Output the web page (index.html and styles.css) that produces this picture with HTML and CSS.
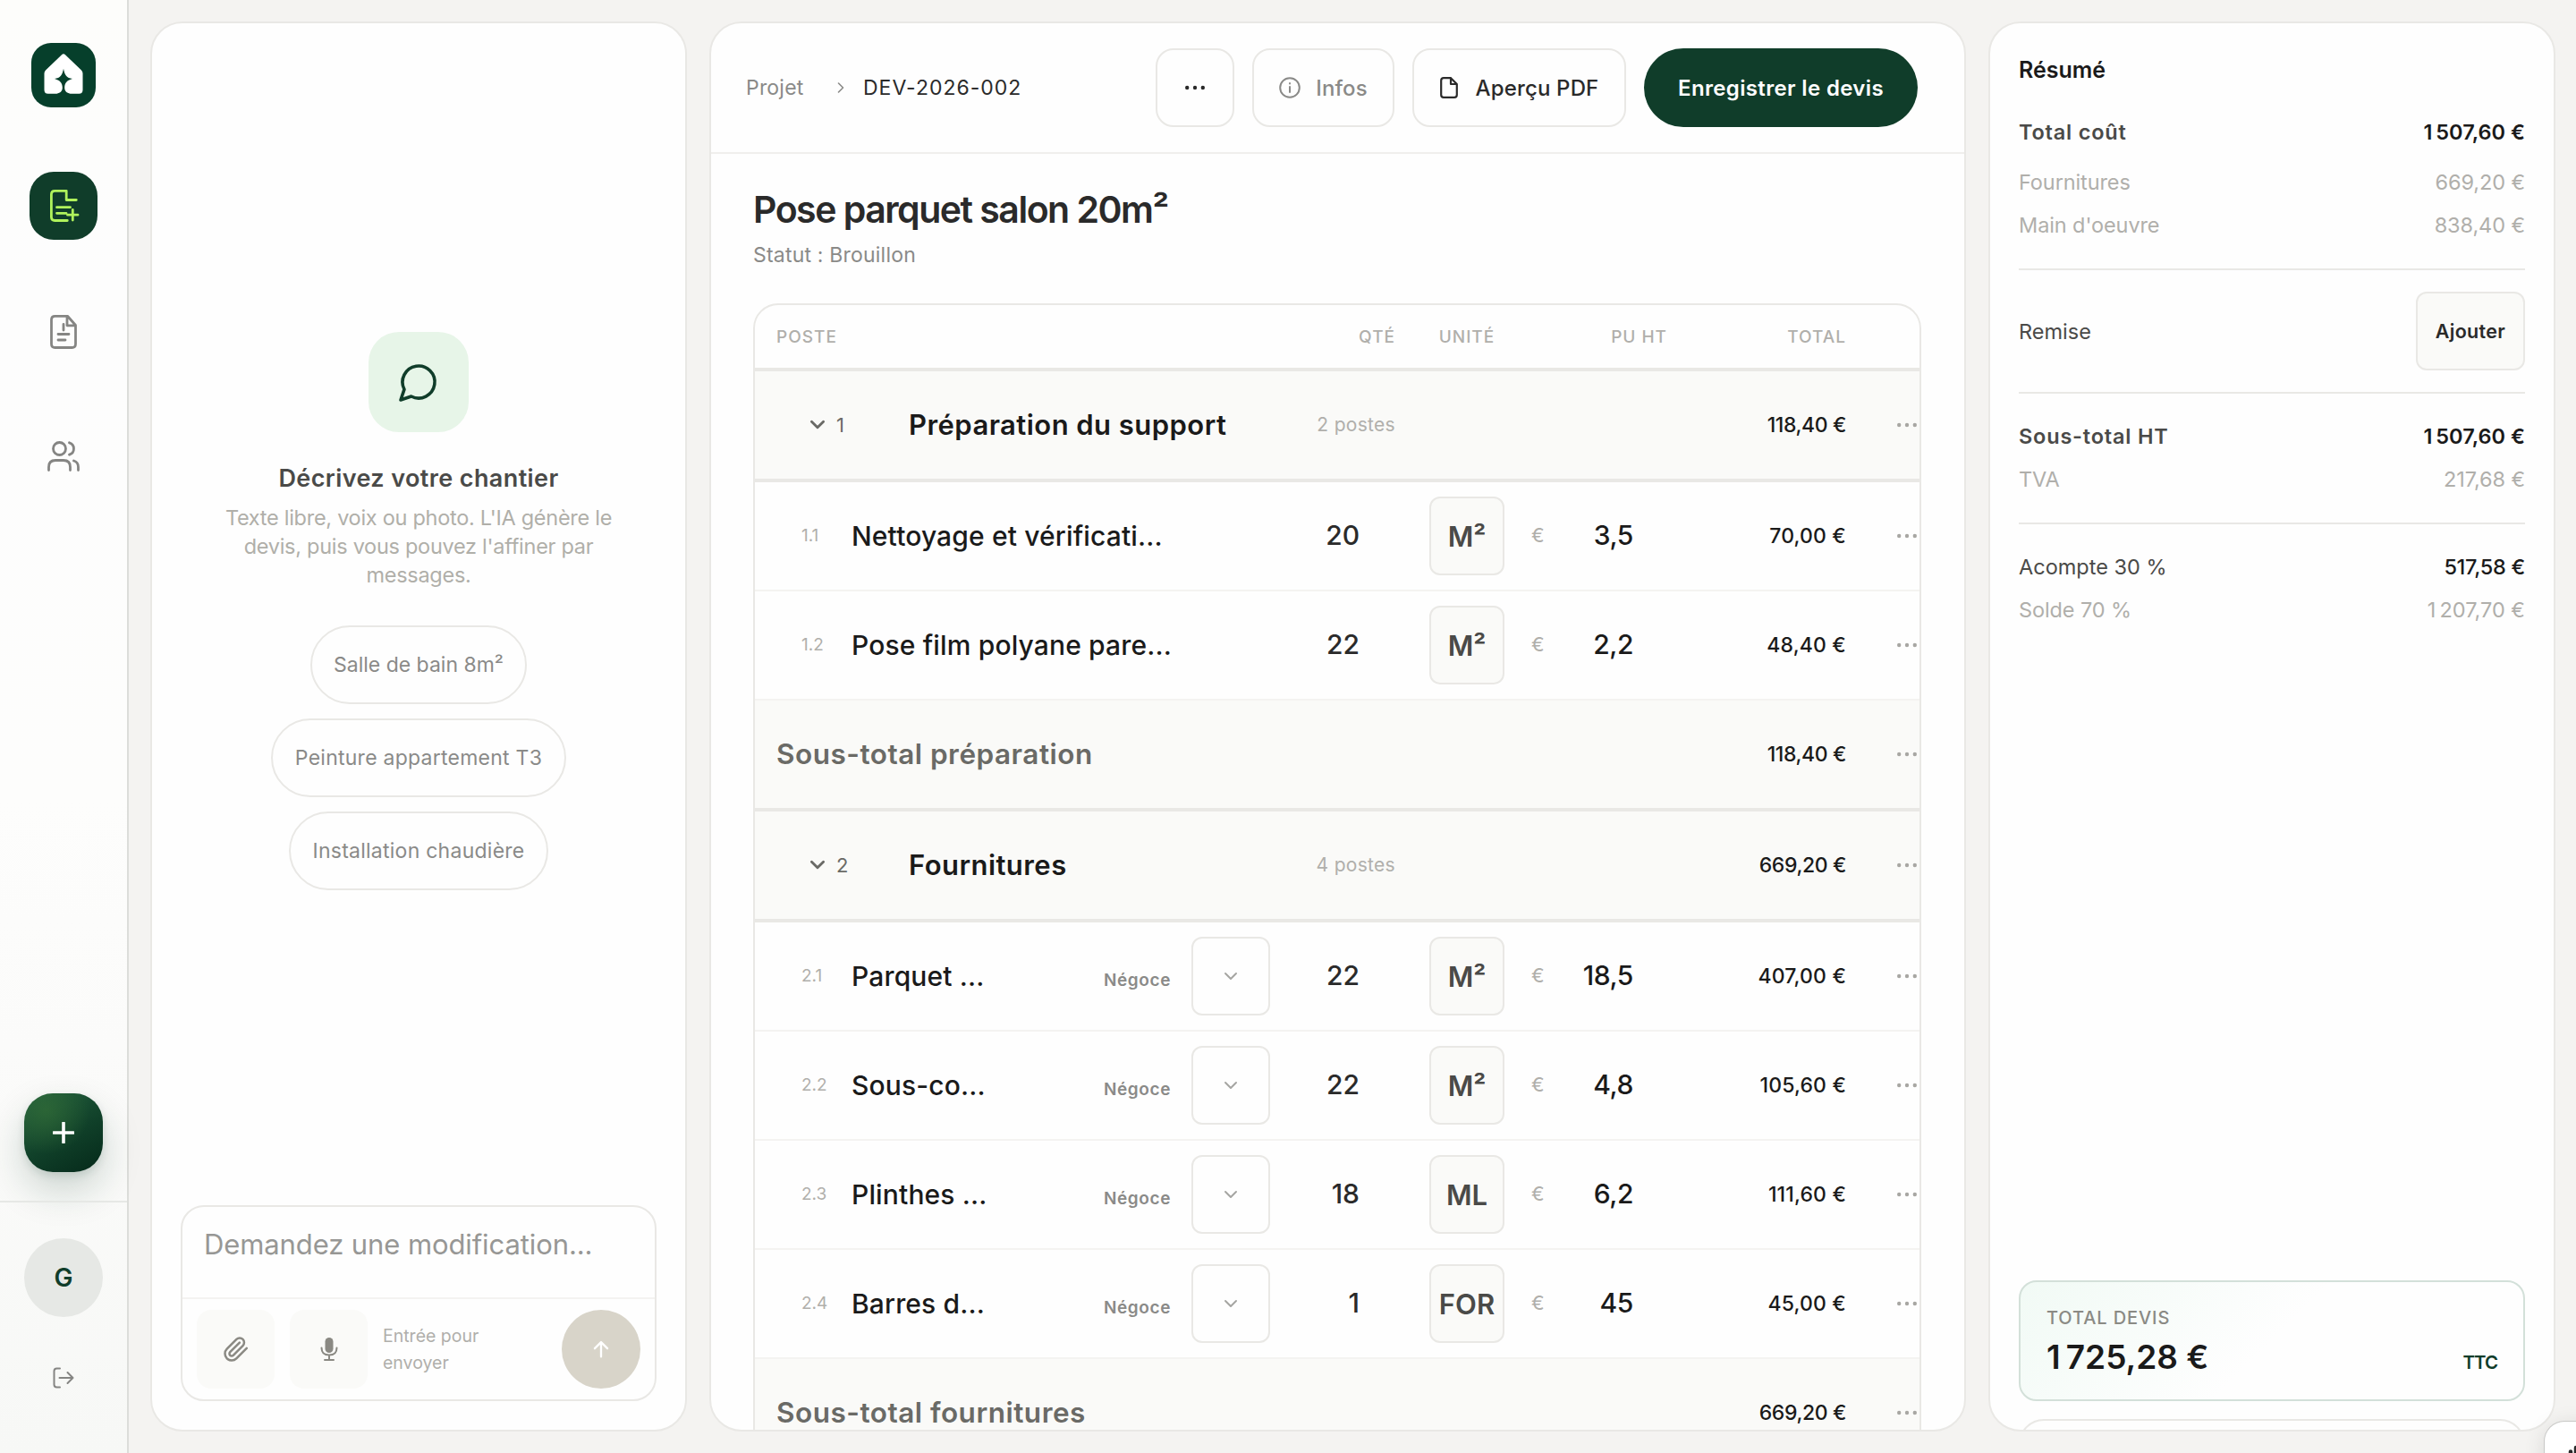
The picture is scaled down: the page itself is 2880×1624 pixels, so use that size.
FILE: index.html
```html
<!DOCTYPE html>
<html lang="fr">
<head>
    <meta charset="UTF-8">
    <meta name="viewport" content="width=device-width, initial-scale=1.0">
    <title>DEV-2026-002 - Pose parquet salon 20m²</title>
    <link rel="stylesheet" href="styles.css">
</head>
<body>
    <svg width="0" height="0" class="sprite">
        <symbol id="dots" viewBox="0 0 24 24"><circle cx="3.2" cy="12" r="2.2"/><circle cx="12" cy="12" r="2.2"/><circle cx="20.8" cy="12" r="2.2"/></symbol>
        <symbol id="chevron" viewBox="0 0 16 10"><path d="M2 2l6 6 6-6"/></symbol>
    </svg>

    <aside class="sidebar">
        <div class="logo">
            <svg viewBox="0 0 72 72"><path fill="#fff" d="M34 13.200Q36 11.300 38 13.200L56 30.500Q57.500 32 57.500 34V52.500Q57.500 56.700 53.300 56.700H43.500C39.500 56 37.200 53.500 37.200 50C37.200 44.500 40.500 41.500 46 40C39.500 39 37.300 36 36 28.700C34.700 36 32.500 39 26 40C31.500 41.500 34.800 44.500 34.800 50C34.800 53.500 32.500 56 28.500 56.700H18.700Q14.500 56.700 14.500 52.500V34Q14.500 32 16 30.500Z"/></svg>
        </div>
        <nav class="nav">
            <a class="nav-item active">
                <svg viewBox="0 0 76 76"><path d="M52.300 31.500H41.200V21.300H28.300Q24.400 21.300 24.400 25.200V50.600Q24.400 54.500 28.300 54.500H42.300M30.500 39.700H45.500M30.500 46.300H41M48.300 42.500V54M42.500 48.200H54"/></svg>
            </a>
            <a class="nav-item">
                <svg viewBox="0 0 76 76"><path d="M42.500 21.300H28.500Q24.500 21.300 24.500 25.300V52.500Q24.500 56.500 28.500 56.500H47.500Q51.500 56.500 51.500 52.500V31.500ZM42 21.800V31.800H51.500M38 30.500V37M32 41.500H44M32 48H40"/></svg>
            </a>
            <a class="nav-item">
                <svg viewBox="0 0 76 76"><path d="M21.500 53.500V50Q21.500 42.500 29 42.500H38Q45.500 42.500 45.500 50V53.500M33.500 22.500A7 7 0 0 1 33.500 36.500A7 7 0 0 1 33.500 22.500M44.500 22.800A7 7 0 0 1 44.500 36.200M49.500 43Q54.500 44.500 54.500 50V53.500"/></svg>
            </a>
        </nav>
        <button class="add-btn"><svg viewBox="0 0 24 24"><path d="M12 1v22M1 12h22"/></svg></button>
        <div class="account">
            <div class="avatar">G</div>
            <svg class="logout" viewBox="0 0 24 24"><path d="M8 1.500H4.500Q1.500 1.500 1.500 4.500V19.500Q1.500 22.500 4.500 22.500H8M7.500 12H22.500M16.500 6l6 6-6 6"/></svg>
        </div>
    </aside>

    <main class="workspace">
        <section class="panel chat">
            <div class="chat-empty">
                <div class="chat-icon">
                    <svg viewBox="0 0 24 24"><path d="M7.900 20A9 9 0 1 0 4 16.100L2 22Z"/></svg>
                </div>
                <h2>Décrivez votre chantier</h2>
                <p>Texte libre, voix ou photo. L'IA génère le<br>devis, puis vous pouvez l'affiner par<br>messages.</p>
                <div class="chips">
                    <button class="chip chip-1">Salle de bain 8m²</button>
                    <button class="chip chip-2">Peinture appartement T3</button>
                    <button class="chip chip-3">Installation chaudière</button>
                </div>
            </div>
            <div class="composer">
                <div class="composer-input">Demandez une modification...</div>
                <div class="composer-bar">
                    <button class="tool"><svg class="clip" viewBox="0 0 24 24"><path d="M21.440 11.050l-9.190 9.190a6 6 0 0 1-8.490-8.490l8.570-8.570A4 4 0 1 1 18 8.840l-8.590 8.570a2 2 0 0 1-2.830-2.830l8.490-8.480"/></svg></button>
                    <button class="tool"><svg class="mic" viewBox="0 0 20 28"><rect x="5.500" y="1" width="9" height="17" rx="4.500" fill="currentColor" stroke="none"/><path d="M1.500 12.500Q1.500 20.500 10 20.500Q18.500 20.500 18.500 12.500M10 20.500V26M5 26h10"/></svg></button>
                    <span class="hint">Entrée pour envoyer</span>
                    <button class="send"><svg viewBox="0 0 24 24"><path d="M12 22V3M3.500 11L12 2.500 20.500 11"/></svg></button>
                </div>
            </div>
        </section>

        <section class="panel quote">
            <header class="quote-header">
                <div class="breadcrumb">
                    <span class="crumb">Projet</span>
                    <svg viewBox="0 0 8 12"><path d="M1.500 1l5 5-5 5"/></svg>
                    <span class="crumb current">DEV-2026-002</span>
                </div>
                <div class="actions">
                    <button class="btn btn-more"><svg class="ico-dots"><use href="#dots"/></svg></button>
                    <button class="btn btn-infos"><svg viewBox="0 0 24 24"><circle cx="12" cy="12" r="10.800"/><path d="M12 11v6M12 7v.5"/></svg>Infos</button>
                    <button class="btn btn-pdf"><svg viewBox="0 0 20 24"><path d="M12 1.200H4Q1.200 1.200 1.200 4V20Q1.200 22.800 4 22.800H16Q18.800 22.800 18.800 20V8L12 1.200V8H18.800"/></svg>Aperçu PDF</button>
                    <button class="btn btn-save">Enregistrer le devis</button>
                </div>
            </header>

            <div class="quote-body">
                <h1>Pose parquet salon 20m²</h1>
                <p class="status">Statut : Brouillon</p>

                <div class="table">
                    <div class="row head">
                        <span>POSTE</span><span class="qty">QTÉ</span><span class="unit">UNITÉ</span><span class="pu">PU HT</span><span class="total">TOTAL</span><span></span>
                    </div>

                    <div class="row section">
                        <div class="poste"><svg class="chev"><use href="#chevron"/></svg><span class="num">1</span><span class="name">Préparation du support</span></div>
                        <span class="count">2 postes</span><span></span><span></span><span class="total">118,40 €</span>
                        <svg class="dots"><use href="#dots"/></svg>
                    </div>
                    <div class="row item">
                        <div class="poste"><span class="num">1.1</span><span class="name">Nettoyage et vérificati...</span></div>
                        <span class="qty">20</span><span class="unit"><b>M²</b></span><span class="pu"><i>€</i>3,5</span><span class="total">70,00 €</span>
                        <svg class="dots"><use href="#dots"/></svg>
                    </div>
                    <div class="row item">
                        <div class="poste"><span class="num">1.2</span><span class="name">Pose film polyane pare...</span></div>
                        <span class="qty">22</span><span class="unit"><b>M²</b></span><span class="pu"><i>€</i>2,2</span><span class="total">48,40 €</span>
                        <svg class="dots"><use href="#dots"/></svg>
                    </div>
                    <div class="row subtotal">
                        <span class="name">Sous-total préparation</span><span></span><span></span><span></span><span class="total">118,40 €</span>
                        <svg class="dots"><use href="#dots"/></svg>
                    </div>

                    <div class="row section">
                        <div class="poste"><svg class="chev"><use href="#chevron"/></svg><span class="num">2</span><span class="name">Fournitures</span></div>
                        <span class="count">4 postes</span><span></span><span></span><span class="total">669,20 €</span>
                        <svg class="dots"><use href="#dots"/></svg>
                    </div>
                    <div class="row item">
                        <div class="poste"><span class="num">2.1</span><span class="name">Parquet ...</span><span class="tag">Négoce</span><span class="select"><svg><use href="#chevron"/></svg></span></div>
                        <span class="qty">22</span><span class="unit"><b>M²</b></span><span class="pu"><i>€</i>18,5</span><span class="total">407,00 €</span>
                        <svg class="dots"><use href="#dots"/></svg>
                    </div>
                    <div class="row item">
                        <div class="poste"><span class="num">2.2</span><span class="name">Sous-co...</span><span class="tag">Négoce</span><span class="select"><svg><use href="#chevron"/></svg></span></div>
                        <span class="qty">22</span><span class="unit"><b>M²</b></span><span class="pu"><i>€</i>4,8</span><span class="total">105,60 €</span>
                        <svg class="dots"><use href="#dots"/></svg>
                    </div>
                    <div class="row item">
                        <div class="poste"><span class="num">2.3</span><span class="name">Plinthes ...</span><span class="tag">Négoce</span><span class="select"><svg><use href="#chevron"/></svg></span></div>
                        <span class="qty">18</span><span class="unit"><b>ML</b></span><span class="pu"><i>€</i>6,2</span><span class="total">111,60 €</span>
                        <svg class="dots"><use href="#dots"/></svg>
                    </div>
                    <div class="row item">
                        <div class="poste"><span class="num">2.4</span><span class="name">Barres d...</span><span class="tag">Négoce</span><span class="select"><svg><use href="#chevron"/></svg></span></div>
                        <span class="qty">1</span><span class="unit"><b>FOR</b></span><span class="pu"><i>€</i>45</span><span class="total">45,00 €</span>
                        <svg class="dots"><use href="#dots"/></svg>
                    </div>
                    <div class="row subtotal">
                        <span class="name">Sous-total fournitures</span><span></span><span></span><span></span><span class="total">669,20 €</span>
                        <svg class="dots"><use href="#dots"/></svg>
                    </div>
                </div>
            </div>
        </section>

        <section class="panel summary">
            <div class="summary-body">
                <h3>Résumé</h3>
                <div class="group first">
                    <div class="line strong"><span>Total coût</span><span>1&#8239;507,60 €</span></div>
                    <div class="line muted"><span>Fournitures</span><span>669,20 €</span></div>
                    <div class="line muted"><span>Main d'oeuvre</span><span>838,40 €</span></div>
                </div>
                <div class="group discount">
                    <div class="line"><span>Remise</span><button class="btn-small">Ajouter</button></div>
                </div>
                <div class="group">
                    <div class="line strong"><span>Sous-total HT</span><span>1&#8239;507,60 €</span></div>
                    <div class="line muted"><span>TVA</span><span>217,68 €</span></div>
                </div>
                <div class="group last">
                    <div class="line due"><span>Acompte 30 %</span><span>517,58 €</span></div>
                    <div class="line muted"><span>Solde 70 %</span><span>1&#8239;207,70 €</span></div>
                </div>
            </div>
            <div class="summary-footer">
                <div class="total-card">
                    <div class="total-label">TOTAL DEVIS</div>
                    <div class="total-row"><span class="amount">1&#8239;725,28 €</span><span class="ttc">TTC</span></div>
                </div>
                <div class="next-card"></div>
            </div>
        </section>
    </main>

    <div class="widget"><svg viewBox="0 0 24 24"><path d="M2 5v14M6 2v20M12 6v12M18 2v20M22 5v14"/></svg></div>
</body>
</html>
```
FILE: styles.css
```css
* {
    margin: 0;
    padding: 0;
    box-sizing: border-box;
}

body {
    display: flex;
    width: 100vw;
    height: 100vh;
    overflow: hidden;
    background: #f4f3f1;
    font-family: 'Inter', 'Liberation Sans', sans-serif;
    font-size: 23px;
    color: #1a1a1a;
}

button {
    font-family: inherit;
    background: none;
    border: none;
    white-space: nowrap;
}

svg {
    display: block;
    flex: none;
    fill: none;
    stroke: currentColor;
    stroke-width: 2;
    stroke-linecap: round;
    stroke-linejoin: round;
}

.sprite {
    position: absolute;
}

/* Sidebar */
.sidebar {
    width: 144px;
    flex: none;
    display: flex;
    flex-direction: column;
    align-items: center;
    padding-top: 48px;
    border-right: 2px solid #dcddda;
    background: linear-gradient(#fdfdfb, #fdfdfd 20%, #fdfdfc 55%, #fbfbfa 72%, #f7f8f6);
    color: #858583;
}

.logo {
    width: 72px;
    height: 72px;
    border-radius: 22px;
    background: #063f2b;
}

.logo svg {
    stroke: none;
}

.nav {
    display: flex;
    flex-direction: column;
    gap: 64px;
    margin-top: 72px;
}

.nav-item {
    width: 76px;
    height: 76px;
    border-radius: 27px;
}

.nav-item svg {
    stroke-width: 2.8;
}

.nav-item.active {
    background: #103d2a;
    color: #b0f25c;
}

.add-btn {
    width: 88px;
    height: 88px;
    margin-top: auto;
    display: flex;
    align-items: center;
    justify-content: center;
    border-radius: 32px;
    color: #fff;
    background: radial-gradient(circle at 28% 22%, rgba(50, 108, 54, 0.7), transparent 52%), linear-gradient(150deg, #24623f, #104029 55%, #05291a);
    box-shadow: 0 20px 44px rgba(16, 61, 42, 0.2), 0 4px 10px rgba(16, 61, 42, 0.12);
}

.add-btn svg {
    width: 24px;
    height: 24px;
    stroke-width: 3.6;
}

.account {
    width: 100%;
    height: 282px;
    margin-top: 32px;
    padding-top: 40px;
    display: flex;
    flex-direction: column;
    align-items: center;
    gap: 56px;
    border-top: 2px solid #e6e8e5;
}

.avatar {
    width: 88px;
    height: 88px;
    border-radius: 50%;
    background: #e6e8e5;
    color: #103d2a;
    font-size: 28px;
    font-weight: 600;
    line-height: 88px;
    text-align: center;
}

.logout {
    width: 24px;
    height: 24px;
}

/* Panels */
.workspace {
    flex: 1;
    display: grid;
    grid-template-columns: 600px 1405px 634px;
    gap: 24px 25px;
    padding: 24px;
}

.panel {
    height: 1576px;
    overflow: hidden;
    display: flex;
    flex-direction: column;
    background: #fefefe;
    border: 2px solid #e9e8e5;
    border-radius: 36px;
}

/* Chat */
.chat {
    padding: 0 32px 32px;
}

.chat-empty {
    flex: 1;
    display: flex;
    flex-direction: column;
    align-items: center;
    justify-content: center;
    padding-bottom: 8px;
    text-align: center;
}

.chat-icon {
    width: 112px;
    height: 112px;
    margin-bottom: 32px;
    display: flex;
    align-items: center;
    justify-content: center;
    border-radius: 34px;
    background: #e7f5e8;
    color: #103d2a;
}

.chat-icon svg {
    width: 48px;
    height: 48px;
    stroke-width: 1.8;
}

.chat-empty h2 {
    font-size: 27px;
    font-weight: 600;
    line-height: 40px;
    letter-spacing: 0.4px;
    color: #4a4a48;
}

.chat-empty p {
    margin-top: 8px;
    font-size: 23.500px;
    line-height: 32px;
    letter-spacing: -0.28px;
    color: #b0afa9;
    white-space: nowrap;
}

.chips {
    display: flex;
    flex-direction: column;
    align-items: center;
    gap: 16px;
    margin-top: 40px;
}

.chip {
    height: 88px;
    border: 2px solid #e9e8e5;
    border-radius: 44px;
    font-size: 23px;
    letter-spacing: 0.25px;
    color: #8a8a88;
}

.chip-1 {
    width: 242px;
    letter-spacing: 0;
}

.chip-2 { width: 330px; }
.chip-3 { width: 290px; }

.composer {
    height: 219px;
    border: 2px solid #e9e8e5;
    border-radius: 26px;
}

.composer-input {
    height: 101px;
    padding: 22px 24px 0;
    font-size: 31px;
    line-height: 40px;
    letter-spacing: -0.1px;
    color: #979795;
    white-space: nowrap;
}

.composer-bar {
    display: flex;
    align-items: center;
    height: 114px;
    padding: 0 16px;
    border-top: 2px solid #f4f3f1;
}

.tool {
    width: 87px;
    height: 88px;
    margin-right: 17px;
    display: flex;
    align-items: center;
    justify-content: center;
    border-radius: 16px;
    background: #fafaf8;
    color: #8a8983;
}

.clip {
    width: 30px;
    height: 30px;
}

.mic {
    width: 20px;
    height: 28px;
}

.hint {
    width: 130px;
    font-size: 19.500px;
    line-height: 30px;
    color: #b0afab;
}

.send {
    width: 88px;
    height: 88px;
    margin-left: auto;
    display: flex;
    align-items: center;
    justify-content: center;
    border-radius: 50%;
    background: #d8d4c9;
    color: #fff;
}

.send svg {
    width: 20px;
    height: 20px;
    stroke-width: 2.8;
}

/* Quote header */
.quote-header {
    height: 146px;
    flex: none;
    display: flex;
    align-items: center;
    justify-content: space-between;
    padding: 0 52px 0 39px;
    border-bottom: 2px solid #f0efed;
}

.breadcrumb {
    display: flex;
    align-items: center;
    font-size: 23px;
    letter-spacing: 0.2px;
}

.crumb {
    width: 102px;
    color: #8a8a88;
}

.breadcrumb svg {
    width: 8px;
    height: 12px;
    margin-right: 21px;
    color: #8a8a88;
    stroke-width: 1.6;
}

.crumb.current {
    width: auto;
    letter-spacing: 1px;
    color: #2a2a2a;
}

.actions {
    display: flex;
    gap: 20px;
}

.btn {
    height: 88px;
    display: flex;
    align-items: center;
    justify-content: center;
    gap: 17px;
    border: 2px solid #e9e8e5;
    border-radius: 20px;
    font-size: 24px;
    font-weight: 500;
    letter-spacing: 0.15px;
    color: #2a2a2a;
}

.btn-more { width: 88px; }
.btn-infos { width: 159px; color: #8a8a88; }
.btn-pdf { width: 239px; gap: 20px; }

.ico-dots,
.dots {
    width: 24px;
    height: 24px;
    fill: currentColor;
    stroke: none;
}

.btn-infos svg {
    width: 24px;
    height: 24px;
}

.btn-pdf svg {
    width: 20px;
    height: 24px;
    stroke-width: 2.2;
}

.btn-save {
    width: 306px;
    border: none;
    border-radius: 44px;
    background: #103d2a;
    color: #fff;
    font-weight: 600;
    letter-spacing: 0.35px;
}

/* Quote body */
.quote-body {
    padding: 34px 48px 0 47px;
}

h1 {
    font-size: 41px;
    font-weight: 600;
    line-height: 56px;
    letter-spacing: -1.5px;
    color: #2a2a2a;
}

.status {
    margin-top: 7px;
    font-size: 23px;
    line-height: 32px;
    letter-spacing: 0.2px;
    color: #8a8a88;
}

.table {
    width: 1306px;
    margin-top: 38px;
    border: 2px solid #e9e8e5;
    border-radius: 28px;
    overflow: hidden;
}

.row {
    height: 122px;
    display: grid;
    grid-template-columns: 616px 110px 140px 154px 200px 82px;
    align-items: center;
    border-bottom: 2px solid #f4f3f1;
    white-space: nowrap;
}

.head {
    height: 74px;
    border-bottom: 4px solid #e9e8e5;
    font-size: 19px;
    font-weight: 500;
    letter-spacing: 1px;
    color: #b0afab;
}

.head span:first-child {
    padding-left: 24px;
}

.qty,
.count {
    padding-right: 10px;
    text-align: right;
}

.unit {
    display: flex;
    justify-content: center;
}

.pu,
.total {
    text-align: right;
}

.dots {
    justify-self: end;
    margin-right: 2px;
    color: #a8a7a3;
}

.poste {
    display: flex;
    align-items: center;
}

.num {
    font-size: 22px;
}

.name {
    font-size: 31px;
    font-weight: 600;
    letter-spacing: 0.45px;
}

.row .total {
    font-weight: 500;
}

.section,
.subtotal {
    height: 124px;
    padding-bottom: 1px;
    border-bottom: 4px solid #e9e8e5;
    background: #fafaf8;
}

.section .total,
.subtotal .total {
    letter-spacing: -0.4px;
}

.section .chev {
    width: 18px;
    height: 11px;
    margin: 0 12px 0 61px;
    stroke-width: 2.6;
    color: #6a6a66;
}

.section .num {
    width: 81px;
    color: #6a6a66;
}

.count {
    font-size: 21px;
    letter-spacing: 0.3px;
    color: #b0afab;
}

.subtotal .name {
    padding-left: 24px;
    font-size: 31.500px;
    letter-spacing: 0.5px;
    color: #6a6a66;
}

.item .num {
    width: 56px;
    margin-left: 52px;
    padding-bottom: 2px;
    font-size: 19px;
    color: #b0afab;
}

.item .name {
    width: 282px;
    font-size: 30px;
    font-weight: 500;
    letter-spacing: 0.15px;
}

.tag {
    width: 98px;
    padding-top: 8px;
    font-size: 19px;
    font-weight: 600;
    letter-spacing: 0.6px;
    color: #8a8a88;
}

.select {
    width: 88px;
    height: 88px;
    display: flex;
    align-items: center;
    justify-content: center;
    border: 2px solid #e9e8e5;
    border-radius: 12px;
    color: #a5a5a2;
}

.select svg {
    width: 16px;
    height: 10px;
}

.item .qty {
    padding: 0 50px 2px 0;
    font-size: 30px;
    font-weight: 500;
    color: #2a2a2a;
}

.item .unit b {
    width: 84px;
    height: 88px;
    border: 2px solid #e9e8e5;
    border-radius: 12px;
    background: #fafaf8;
    font-size: 31px;
    font-weight: 600;
    line-height: 85px;
    text-align: center;
    color: #4a4a48;
}

.item .pu {
    display: flex;
    align-items: center;
    justify-content: space-between;
    padding: 0 38px 2px 2px;
    font-size: 30px;
    font-weight: 500;
    letter-spacing: -0.4px;
}

.item .total {
    padding-bottom: 1px;
    letter-spacing: 0.15px;
}

.pu i {
    font-size: 22px;
    font-style: normal;
    font-weight: 400;
    color: #b0afab;
}

/* Summary */
.summary {
    padding: 28px 32px 0;
}

.summary-body {
    flex: 1;
}

h3 {
    font-size: 25px;
    font-weight: 600;
    line-height: 48px;
}

.group {
    padding: 23px 0 25px;
    border-bottom: 2px solid #e9e8e5;
}

.first {
    padding: 21px 0 25px;
}

.discount {
    padding: 24px 0;
}

.last {
    border-bottom: none;
}

.line {
    height: 48px;
    display: flex;
    align-items: center;
    justify-content: space-between;
    font-size: 23.500px;
    color: #4a4a48;
}

.discount .line {
    height: 88px;
}

.strong {
    font-weight: 600;
}

.strong span:first-child {
    letter-spacing: 0.8px;
}

.first .strong {
    margin-bottom: 8px;
}

.strong span:last-child,
.due span:last-child {
    color: #1a1a1a;
}

.due span:last-child {
    font-weight: 500;
    letter-spacing: -0.3px;
}

.muted {
    letter-spacing: -0.1px;
    color: #b0afab;
}

.btn-small {
    width: 122px;
    height: 88px;
    border: 2px solid #e9e8e5;
    border-radius: 12px;
    background: #fafaf8;
    font-size: 21.500px;
    font-weight: 600;
    letter-spacing: 0.3px;
    color: #2a2a2a;
}

.summary-footer {
    height: 167px;
    flex: none;
}

.total-card {
    height: 135px;
    padding: 24px 29px 0;
    border: 2px solid #d3e0d9;
    border-radius: 20px;
    background: linear-gradient(135deg, #f1faf5, #fefefe 50%);
}

.total-label {
    font-size: 20px;
    font-weight: 500;
    line-height: 32px;
    letter-spacing: 0.9px;
    color: #8a8a84;
}

.total-row {
    display: flex;
    align-items: baseline;
    justify-content: space-between;
}

.amount {
    font-size: 37px;
    font-weight: 600;
    line-height: 56px;
    letter-spacing: -1.3px;
}

.ttc {
    font-size: 20.500px;
    font-weight: 600;
    letter-spacing: -1px;
    color: #103d2a;
}

.next-card {
    height: 100px;
    margin-top: 20px;
    border: 2px solid #e9e8e5;
    border-radius: 28px;
}

/* Floating button, sits over the bottom right corner */
.widget {
    position: absolute;
    right: -53px;
    bottom: -53px;
    width: 88px;
    height: 88px;
    padding: 26px;
    border-radius: 22px;
    background: #fff;
    box-shadow: 0 0 0 1px #c9c9c7, 0 4px 24px rgba(0, 0, 0, 0.12);
    color: #2a2a2a;
}

.widget svg {
    width: 36px;
    height: 36px;
    stroke-width: 3;
}
```
